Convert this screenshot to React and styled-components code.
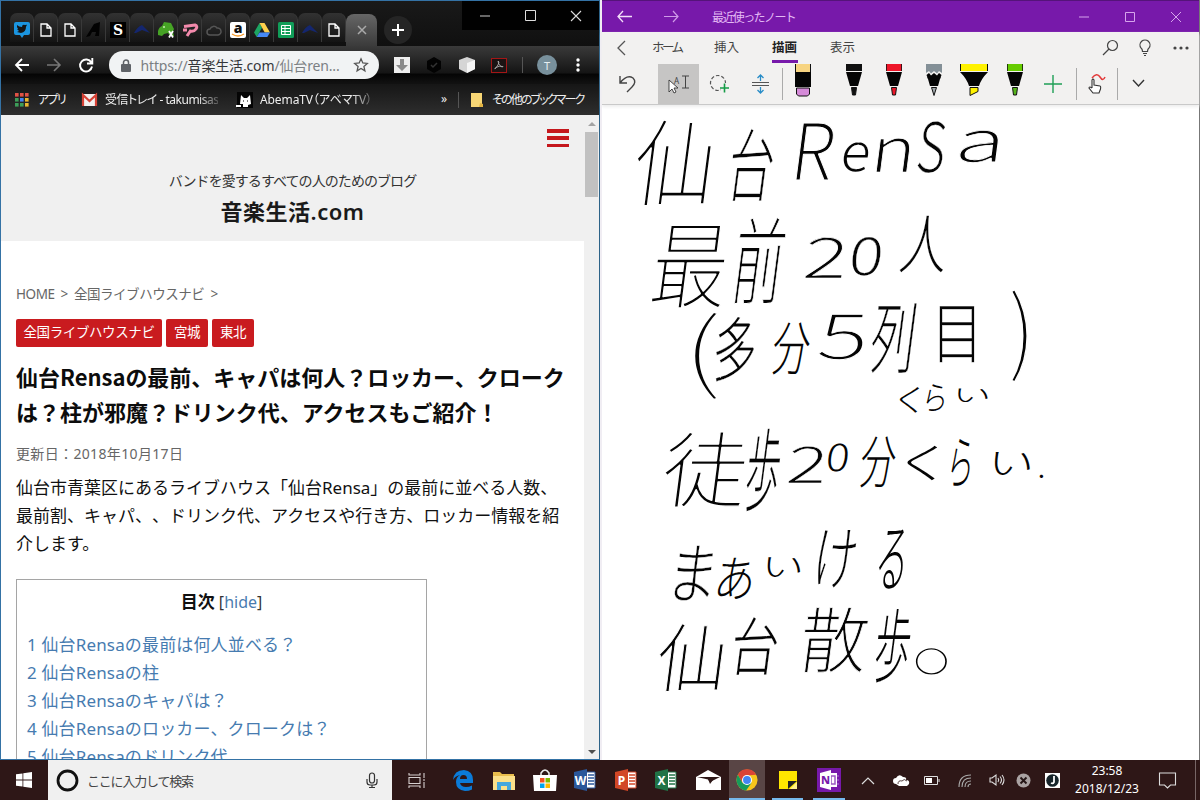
import React from "react";
import styled, { createGlobalStyle } from "styled-components";

const Global = createGlobalStyle`
  * { box-sizing: border-box; }
  body { margin: 0; background: #fff; font-family: "Noto Sans", "Noto Sans CJK JP", sans-serif; text-spacing-trim: space-all; }
  svg { display: block; flex: none; overflow: visible; }
`;

const Desktop = styled.div`
  width: 1200px; height: 800px; overflow: hidden;
  display: flex; flex-direction: column;
`;
const Windows = styled.div`display: flex; height: 760px;`;

/* ---------- browser window ---------- */
const Browser = styled.section`
  width: 600px; height: 760px; display: flex; flex-direction: column; overflow: hidden;
  border: 1px solid #3472a5; border-right-color: #2d6388; background: #161616;
`;
const TabStrip = styled.div`
  height: 45px; display: flex; align-items: flex-start; padding-left: 9px;
  background: linear-gradient(#191919, #101010);
`;
const Tab = styled.div`
  width: 24px; height: 29px; margin-top: 12px; padding-left: 1px;
  display: flex; align-items: center; justify-content: center;
  background: linear-gradient(#323232, #141414); border-radius: 7px 7px 0 0;
  border-right: 1px solid #393939; padding-top: 5px;
`;
const ActiveTab = styled.div`
  width: 31px; height: 32px; margin-top: 13px; display: flex; align-items: center; justify-content: center;
  background: linear-gradient(#666, #3b3b3b); border-radius: 8px 8px 0 0;
`;
const NewTab = styled.div`
  width: 28px; height: 28px; margin: 15px 0 0 7px; border-radius: 50%;
  background: #252525; display: flex; align-items: center; justify-content: center;
`;
const Controls = styled.div`
  width: 137px; height: 29px; margin-left: auto; background: #010101;
  display: flex; justify-content: space-around; align-items: center;
`;
const Toolbar = styled.div`
  height: 38px; display: flex; align-items: center; flex: none;
  background: linear-gradient(#3a3a3a, #151515 70%, #050505 75%, #121212);
`;
const ToolIcon = styled.span`
  width: ${(p) => p.$w || 32}px; display: flex; justify-content: center; flex: none;
`;
const Omnibox = styled.div`
  width: 270px; height: 28px; margin-left: 2px; border-radius: 14px; background: #f1f3f4; flex: none;
  display: flex; align-items: center; justify-content: space-between; padding: 0 11px 0 12px;
  font-size: 14px; color: #7b7f83; white-space: nowrap;
`;
const Url = styled.span`
  width: 204px; letter-spacing: -0.15px;
  b { font-weight: 400; color: #35373a; }
`;
const Avatar = styled.span`
  width: 20px; height: 20px; border-radius: 50%; background: #78909c; color: #e7eef2; flex: none;
  font-size: 11px; display: flex; align-items: center; justify-content: center;
`;
const Divider = styled.i`
  width: 1px; height: ${(p) => p.$h}px; background: ${(p) => p.$c || "#555"}; flex: none;
`;
const Bookmarks = styled.div`
  height: 31px; flex: none; display: flex; align-items: center; padding: 0 0 0 14px;
  color: #eee; font-size: 12px; white-space: nowrap; background: linear-gradient(#161616, #2e2e2e);
`;
const Mark = styled.span`
  margin-left: ${(p) => p.$gap}px; width: ${(p) => p.$w}px; letter-spacing: ${(p) => p.$ls || 0}px; flex: none;
  position: relative; top: -1px;
  font-feature-settings: "palt";
  ${(p) => p.$fade && "mask-image: linear-gradient(90deg,#000 82%,rgba(0,0,0,.25));"}
`;
const Viewport = styled.div`display: flex; flex: 1; min-height: 0; background: #fff;`;
const Page = styled.main`width: 583px; overflow: hidden; color: #111;`;
const Scrollbar = styled.div`
  width: 15px; background: #f0f0f0; display: flex; flex-direction: column; align-items: center;
`;
const Thumb = styled.div`width: 13px; height: 65px; background: #c1c1c1; margin: 6px 0 auto;`;
const Arrow = styled.i`
  margin: ${(p) => (p.$down ? "0 0 5px" : "7px 0 0")};
  border: 4px solid transparent;
  ${(p) => (p.$down ? "border-top-color:#505050;border-bottom:0" : "border-bottom-color:#a3a3a3;border-top:0")};
`;
const SiteHeader = styled.header`
  height: 126px; background: #f0f0f0; display: flex; flex-direction: column; align-items: center;
`;
const Burger = styled.div`
  align-self: flex-end; margin: 14px 15px 0 0; width: 22px; height: 18px;
  display: flex; flex-direction: column; justify-content: space-between;
  i { height: 3.5px; background: #c5171c; }
`;
const Tagline = styled.div`
  margin-top: 24px; height: 20px; line-height: 20px; font-size: 14px; letter-spacing: -0.93px; color: #333; white-space: nowrap;
`;
const SiteName = styled.h1`
  margin: 5px 0 0; font-size: 22px; line-height: 30px; letter-spacing: 0.5px; font-weight: 600; color: #1a1a1a;
`;
const Article = styled.article`padding: 42px 0 0 15px;`;
const Crumbs = styled.div`
  height: 22px; line-height: 22px; font-size: 13.5px; letter-spacing: -0.45px; word-spacing: 3px; color: #666; white-space: pre;
`;
const Tags = styled.div`display: flex; gap: 4px; margin-top: 14px;`;
const Tag = styled.span`
  height: 28px; line-height: 26px; width: ${(p) => p.$w}px; text-align: center; background: #c91b1f; color: #fff;
  font-size: 13.5px; letter-spacing: -0.4px; border-radius: 2px; white-space: nowrap;
`;
const Title = styled.h2`
  margin: 12px 0 0; font-size: 22px; line-height: 35px; font-weight: 700; color: #0c0c0c; white-space: nowrap;
  font-family: "Noto Sans CJK JP", sans-serif; letter-spacing: -0.02px;
`;
const Updated = styled.div`margin-top: 15px; height: 20px; line-height: 20px; font-size: 14px; letter-spacing: 0.35px; color: #666;`;
const Lead = styled.p`margin: 10px 0 0; font-size: 17px; line-height: 28px; white-space: nowrap; color: #111;`;
const Toc = styled.nav`
  width: 411px; height: 240px; margin-top: 21px; border: 1px solid #a5a5a5; padding: 8px 10px; font-size: 17px;
`;
const TocTitle = styled.div`
  text-align: center; line-height: 28px; height: 28px; font-size: 16px; color: #333;
  strong { font-size: 17px; color: #111; } a { color: #4a7caf; }
`;
const TocItem = styled.div`line-height: 28px; color: #467bb0; white-space: nowrap; letter-spacing: 0.15px;`;
const TocList = styled.div`margin-top: 15px;`;

/* ---------- note window ---------- */
const Notes = styled.section`width: 600px; display: flex; flex-direction: column; background: #fff; border-left: 2px solid #f0edf3; border-right: 1px solid #777;`;
const TitleBar = styled.div`
  height: 32px; background: #7719aa; border-top: 1px solid #55137a; color: #e2b8f4;
  display: flex; align-items: center; font-size: 12px; flex: none;
`;
const Slot = styled.span`
  width: ${(p) => p.$w}px; display: flex; justify-content: center; align-items: center; flex: none; white-space: nowrap;
`;
const WindowName = styled.span`margin-left: 16px; letter-spacing: -1.6px; font-size: 12px; white-space: nowrap;`;
const Grow = styled.span`flex: 1;`;
const Ribbon = styled.div`
  background: #f2f1f0; height: 73px; border-bottom: 1px solid #c9c9c9; flex: none; box-shadow: 0 2px 3px #eee;
`;
const MenuRow = styled.div`display: flex; height: 31px; align-items: center; font-size: 12.5px; color: #444;`;
const MenuItem = styled.span`
  width: ${(p) => p.$w}px; height: 31px; line-height: 31px; margin-right: ${(p) => p.$gap}px; letter-spacing: ${(p) => p.$ls || 0}px; white-space: nowrap;
  ${(p) => p.$on && "font-weight:700;color:#222;border-bottom:3px solid #7719aa;"}
`;
const ToolRow = styled.div`display: flex; height: 41px; align-items: center;`;
const Selected = styled.span`
  width: 41px; height: 40px; background: #c6c5c4; display: flex; align-items: center; justify-content: center;
`;
const Canvas = styled.div`flex: 1; min-height: 0;`;
const Ink = styled.text`
  font-family: "Noto Sans CJK JP", sans-serif; font-weight: 300; fill: #050505;
  stroke: #fff; stroke-linejoin: round;
`;

/* ---------- taskbar ---------- */
const Taskbar = styled.footer`height: 40px; display: flex; background: #2e1717; color: #fff; flex: none;`;
const Cell = styled.div`
  width: ${(p) => p.$w}px; height: 40px; display: flex; align-items: center; justify-content: center; flex: none;
  background: ${(p) => (p.$active ? "#594545" : "transparent")};
`;
const Running = styled(Cell)`border-bottom: 2px solid #76b9ed; padding-top: 2px; margin: 0 ${(p) => p.$m || 0}px;`;
const Search = styled.div`
  width: 344px; background: #f0f0f0; color: #444; font-size: 13px; display: flex; align-items: center; padding: 0 14px 0 8px;
  span { flex: 1; margin-left: 8px; letter-spacing: -1.2px; }
`;
const Clock = styled.div`
  width: 76px; text-align: center; font-size: 12px; line-height: 18px; display: flex; flex-direction: column; justify-content: center; white-space: nowrap;
`;

/* Small line icon; width and height double as its viewBox */
const Line = ({ w = 16, h = w, d, c = "#fff", s = 1.5, fill = "none", children }) => (
  <svg width={w} height={h} viewBox={`0 0 ${w} ${h}`} fill={fill} stroke={c} strokeWidth={s}>
    {d && <path d={d} />}
    {children}
  </svg>
);

const FileIcon = () => <Line w={12} h={14} d="M1 1h6l4 4v8H1zM7 1v4h4" s={1.3} />;
const Peak = () => <Line w={16} h={10} c="none" fill="#14266e" d="M0 8Q4 1 8 0l8 8-8-3-6 3z" />;
const favicons = [
  <svg width="16" height="16"><path d="M2 0h12a2 2 0 012 2v9a2 2 0 01-2 2h-4l-2 3-2-3H2a2 2 0 01-2-2V2a2 2 0 012-2z" fill="#1b95e0" /><path d="M3 3q2 2 5 2 0-3 3-2l2-.3-1 2Q12 10 7 11l-4-1 2-1-2-2h1L3 5z" fill="#151515" /></svg>,
  <FileIcon />, <FileIcon />,
  <svg width="16" height="16"><path d="M0 15L8 2l6-2-1 14H9l1-4H6l-2 4z" fill="#020202" /></svg>,
  <svg width="16" height="16"><rect width="16" height="16" fill="#000" /><text x="8" y="13" textAnchor="middle" fontSize="14" fontWeight="800" fill="#fff" fontFamily="DejaVu Serif, serif">S</text></svg>,
  <Peak />,
  <svg width="17" height="16"><path d="M0 9Q1 5 4 4l2-4 7 1 3 6-1 3 1 4h-4l-2-3-4 1-2 2-4-1z" fill="#46a325" /><circle cx="6" cy="5" r="1" fill="#c7efae" /><path d="M11 9l4 6.500m0-6.500l-4 6.500" stroke="#fff" strokeWidth="1.800" /></svg>,
  <svg width="15" height="15"><path d="M1 3.500L12 2q3 1 1 4-2 3-6 2M8 7l-4 6M0 7h4" stroke="#f38aac" strokeWidth="3" fill="none" strokeLinejoin="round" /></svg>,
  <svg width="16" height="12"><path d="M4 11a3 3 0 010-6 4 4 0 017-1 3 3 0 011 7z" fill="none" stroke="#555" strokeWidth="1.5" /></svg>,
  <svg width="16" height="16"><rect width="16" height="16" rx="2" fill="#fff" /><text x="8" y="11" textAnchor="middle" fontSize="14" fontWeight="800" fill="#111" fontFamily="Open Sans, sans-serif">a</text><path d="M2 12q6 4 12 0" stroke="#f79a28" strokeWidth="1.3" fill="none" /></svg>,
  <svg width="16" height="14"><path d="M5.5 0L0 9.5l2.7 4.5L8 4.7z" fill="#1da462" /><path d="M5.5 0h5L16 9.5h-5.3z" fill="#ffd04c" /><path d="M5.4 9.5H16L13.3 14H2.7z" fill="#4688f4" /></svg>,
  <svg width="16" height="16"><rect width="16" height="16" rx="1.5" fill="#109d58" /><path d="M3.5 3.5h9v9h-9zM3.5 6.5h9M3.5 9.5h9M7 3.5v9" fill="none" stroke="#fff" /></svg>,
  <Peak />, <FileIcon />,
];

const Pen = ({ top, tip, kind }) => (
  <svg width="30" height="34" viewBox="0 0 30 34">
    {kind === "eraser" ? (
      <>
        <path d="M7 -3h16v8H7z" fill="#f7d481" /><path d="M7.5 -3v8M22.500 -3v8" stroke="#111" />
        <path d="M7 5h16v15H7z" fill="#050505" />
        <path d="M8.500 21h13v6l-2 2h-9l-2-2z" fill="#d58ad8" stroke="#111" />
      </>
    ) : kind === "marker" ? (
      <>
        <path d="M1 -3h28v7H1z" fill={top} /><path d="M1.500 -3v7M28.500 -3v7" stroke="#111" />
        <path d="M1 5h28Q22 12 20 19H10Q8 12 1 5z" fill="#050505" /><path d="M11 20.500h8v4l-8 4z" fill={tip} stroke="#111" />
      </>
    ) : (
      <>
        <path d="M7 -3h16v7H7z" fill={top} /><path d="M7.500 -3v7M22.500 -3v7" stroke="#111" strokeWidth=".8" />
        <path d="M7 5h16l-4 14h-8z" fill="#050505" />
        {kind === "pencil" && <><path d="M6 4h18v6H6z" fill="#f2f1f0" /><path d="M7 -3h16v9l-3-2-2 2.500-3-2.500-3 2.500L10 4l-3 2z" fill="#849097" /><path d="M7.500 8l2.500-2 2 2.500 3-2.500 3 2.500 2-2.500 2.500 2L21 12H9z" fill="#050505" /></>}
        <path d={kind === "pencil" ? "M12.500 20.500h5l-2.500 8z" : "M12.500 20.500h5l-1 7.500h-3z"} fill={tip} stroke="#111" />
      </>
    )}
  </svg>
);

/* Inked notes: [character, left, top, right, bottom] on the page canvas */
const inked = [
  [["仙", 636, 119, 717, 207], ["台", 729, 128, 776, 201], ["R", 798, 123, 838, 180], ["e", 843, 142, 870, 172], ["n", 877, 138, 912, 172], ["S", 919, 121, 947, 173], ["a", 959, 130, 1000, 163]],
  [["最", 653, 222, 730, 309], ["前", 734, 218, 787, 305], ["2", 807, 236, 848, 278], ["0", 852, 236, 884, 276], ["人", 902, 213, 949, 273]],
  [["(", 693, 313, 720, 401], ["多", 714, 317, 758, 382], ["分", 773, 321, 811, 375], ["5", 820, 313, 868, 360], ["列", 872, 301, 918, 373], ["目", 933, 301, 981, 362], [")", 1012, 290, 1029, 382]],
  [["く", 900, 387, 920, 413], ["ら", 927, 383, 945, 411], ["い", 956, 388, 989, 401]],
  [["徒", 665, 432, 748, 508], ["歩", 746, 428, 783, 511], ["2", 790, 445, 827, 483], ["0", 828, 443, 850, 472], ["分", 861, 435, 897, 488], ["く", 908, 445, 939, 480], ["ら", 952, 437, 972, 486], ["い", 992, 452, 1032, 474], [".", 1040, 474, 1044, 478]],
  [["ま", 673, 545, 715, 601], ["あ", 718, 557, 754, 599], ["い", 765, 557, 802, 576], ["け", 817, 529, 857, 588], ["る", 880, 527, 907, 588]],
  [["仙", 659, 623, 728, 692], ["台", 732, 617, 780, 675], ["散", 802, 607, 869, 673], ["歩", 875, 608, 913, 682], ["。", 917, 649, 948, 676]],
];
/* Ink box of a glyph in em units: left, top above baseline, width, height */
const boxes = {
  R: [0.1, 0.73, 0.52, 0.73], e: [0.05, 0.55, 0.46, 0.57], n: [0.09, 0.55, 0.43, 0.55], S: [0.05, 0.745, 0.5, 0.76], a: [0.05, 0.55, 0.42, 0.57],
  2: [0.045, 0.745, 0.46, 0.745], 0: [0.05, 0.745, 0.46, 0.76], 5: [0.03, 0.73, 0.47, 0.745], "(": [0.09, 0.8, 0.2, 1], ")": [0.04, 0.8, 0.2, 1],
  く: [0.24, 0.8, 0.48, 0.86], ら: [0.2, 0.8, 0.62, 0.84], い: [0.1, 0.69, 0.82, 0.66], ま: [0.13, 0.8, 0.74, 0.84], あ: [0.1, 0.8, 0.81, 0.84],
  け: [0.1, 0.79, 0.82, 0.84], る: [0.15, 0.77, 0.7, 0.8], "。": [0.07, 0.22, 0.27, 0.28], ".": [0.08, 0.12, 0.12, 0.13],
};
const kanjiBox = [0.04, 0.84, 0.92, 0.92];
const upright = "().。目";
const thinning = { ".": 0, "(": 2.2, ")": 1.6, "。": 2.4 };

function InkGlyph({ item }) {
  const [ch, l, t, r, b] = item;
  const [bx, by, bw, bh] = boxes[ch] || kanjiBox;
  const slant = upright.includes(ch) ? 0 : 0.13;
  const lean = slant * (b - t);
  const sx = (r - l - lean * 0.5) / bw;
  const sy = (b - t) / bh;
  const size = 100;
  const slim = thinning[ch] ?? Math.max(0, 4.6 - 240 / Math.sqrt(sx * sy));
  return (
    <Ink
      fontSize={size}
      strokeWidth={slim}
      transform={`translate(${l - lean * 0.35} ${b}) matrix(1 0 ${-slant} 1 0 0) translate(${-bx * sx} ${(by - bh) * sy}) scale(${sx / size} ${sy / size})`}
    >
      {ch}
    </Ink>
  );
}

const Office = ({ letter, color }) => (
  <svg width="23" height="22">
    <path d="M12 3h9v16h-9z" fill="#fff" stroke={color} />
    <path d="M14 6h6M14 9h6M14 12h6M14 15h6" stroke={color} strokeWidth="1.4" />
    <path d="M0 3L13 0v22L0 19z" fill={color} />
    <text x="6.5" y="15.500" textAnchor="middle" fontSize="12" fontWeight="700" fill="#fff" fontFamily="Noto Sans, sans-serif">{letter}</text>
  </svg>
);

const toc = ["1 仙台Rensaの最前は何人並べる？", "2 仙台Rensaの柱", "3 仙台Rensaのキャパは？", "4 仙台Rensaのロッカー、クロークは？", "5 仙台Rensaのドリンク代"];

function BrowserWindow() {
  return (
    <Browser>
      <TabStrip>
        {favicons.map((f, i) => <Tab key={i}>{f}</Tab>)}
        <ActiveTab><Line w={8} d="M0 0l8 8M8 0L0 8" c="#aaa" /></ActiveTab>
        <NewTab><Line w={12} d="M6 0v12M0 6h12" s={2} /></NewTab>
        <Controls>
          <Line w={10} d="M0 5h10" s={1} c="#ccc" />
          <Line w={11} d="M.5 .5h10v10H.5z" s={1} c="#ddd" />
          <Line w={10} d="M0 0l10 10M10 0L0 10" s={1.1} c="#ddd" />
        </Controls>
      </TabStrip>
      <Toolbar>
        <ToolIcon $w={42}><Line w={14} h={12} d="M14 6H1M7 0L1 6l6 6" s={1.8} /></ToolIcon>
        <ToolIcon $w={22}><Line w={14} h={12} d="M0 6h13M7 0l6 6-6 6" s={1.6} c="#777" /></ToolIcon>
        <ToolIcon $w={42}><Line w={14} d="M12.300 4.500A6 6 0 1013 8.500M13.300 0v5.500H8" s={1.9} /></ToolIcon>
        <Omnibox>
          <svg width="10" height="13"><rect y="5" width="10" height="8" rx="1" fill="#5f6368" /><path d="M2.500 6V3.500a2.500 2.500 0 015 0V6" fill="none" stroke="#5f6368" strokeWidth="1.500" /></svg>
          <Url>https://<b>音楽生活.com</b>/仙台ren...</Url>
          <Line w={14} d="M7 .8l1.800 4.200 4.500.4-3.400 3 1 4.400L7 10.500l-3.900 2.300 1-4.400-3.400-3 4.500-.4z" c="#555" s={1.3} />
        </Omnibox>
        <ToolIcon $w={46}><svg width="16" height="16"><rect width="16" height="16" fill="#eee" /><path d="M6 2h4v6h4l-6 6-6-6h4z" fill="#8a8a8a" /></svg></ToolIcon>
        <ToolIcon $w={18}><svg width="14" height="16"><path d="M7 0l7 4v8l-7 4-7-4V4z" fill="#030303" /><path d="M4 8l2 2 4-4" stroke="#333" fill="none" strokeWidth="1.500" /></svg></ToolIcon>
        <ToolIcon $w={48}><svg width="16" height="16"><path d="M8 0l8 3v9l-8 4-8-4V3z" fill="#d5d5d5" /><path d="M8 6l8-3v9l-8 4z" fill="#f5f5f5" /></svg></ToolIcon>
        <ToolIcon $w={16}><svg width="16" height="15"><rect x=".5" y=".5" width="15" height="14" fill="#1b1313" stroke="#a31616" /><path d="M7 3q2 0 0 4l-3 4q-1 0 1-1.500 3-2 7-1 0 1-2 0Q7 6 7 3" stroke="#aaa" fill="none" strokeWidth=".9" /></svg></ToolIcon>
        <ToolIcon $w={30}><Divider $h={16} /></ToolIcon>
        <Avatar>T</Avatar>
        <ToolIcon $w={42}><svg width="4" height="14" fill="#fff"><circle cx="2" cy="2" r="1.700" /><circle cx="2" cy="7" r="1.700" /><circle cx="2" cy="12" r="1.700" /></svg></ToolIcon>
      </Toolbar>
      <Bookmarks>
        <svg width="14" height="14">
          {["#e05245", "#e05245", "#e05245", "#3d9e59", "#4285f4", "#e9b730", "#3d9e59", "#3d9e59", "#e9b730"].map((c, i) => (
            <rect key={i} x={(i % 3) * 5} y={Math.floor(i / 3) * 5} width="3.600" height="3.600" fill={c} />
          ))}
        </svg>
        <Mark $gap={9} $w={28} $ls={-1.7}>アプリ</Mark>
        <svg width="31" height="12"><rect x="16" width="15" height="12" rx="1" fill="#f3f0ef" /><path d="M17 12V1l6.500 6L30 1v11" stroke="#d64236" strokeWidth="2.200" fill="none" /></svg>
        <Mark $gap={8} $w={113} $ls={-0.5} $fade>受信トレイ - takumisas</Mark>
        <svg width="35" height="16"><rect x="19" width="16" height="16" fill="#050505" /><path d="M22 12l1-9 3 3h3l3-3 1 9-3 1v2h-5v-3zM18 13h5v2h-5m9-1h6" fill="#fff" /><path d="M25 9h1m3 0h1" stroke="#000" /></svg>
        <Mark $gap={7} $w={112} $ls={-0.1} $fade>AbemaTV（アベマTV）</Mark>
        <Grow />
        <Mark $gap={0} $w={17}>»</Mark>
        <Divider $h={16} />
        <svg width="25" height="14"><path d="M12 0h11v14H12z" fill="#f8d775" /><path d="M21 10l3 1v3h-4z" fill="#e3b443" /></svg>
        <Mark $gap={8} $w={107} $ls={-1.85}>その他のブックマーク</Mark>
      </Bookmarks>
      <Viewport>
        <Page>
          <SiteHeader>
            <Burger><i /><i /><i /></Burger>
            <Tagline>バンドを愛するすべての人のためのブログ</Tagline>
            <SiteName>音楽生活.com</SiteName>
          </SiteHeader>
          <Article>
            <Crumbs>HOME &gt; 全国ライブハウスナビ &gt;</Crumbs>
            <Tags><Tag $w={146}>全国ライブハウスナビ</Tag><Tag $w={42}>宮城</Tag><Tag $w={42}>東北</Tag></Tags>
            <Title>仙台Rensaの最前、キャパは何人？ロッカー、クローク<br />は？柱が邪魔？ドリンク代、アクセスもご紹介！</Title>
            <Updated>更新日：2018年10月17日</Updated>
            <Lead>仙台市青葉区にあるライブハウス「仙台Rensa」の最前に並べる人数、<br />最前割、キャパ、、ドリンク代、アクセスや行き方、ロッカー情報を紹<br />介します。</Lead>
            <Toc>
              <TocTitle><strong>目次</strong> [<a>hide</a>]</TocTitle>
              <TocList>{toc.map((t) => <TocItem key={t}>{t}</TocItem>)}</TocList>
            </Toc>
          </Article>
        </Page>
        <Scrollbar><Arrow /><Thumb /><Arrow $down /></Scrollbar>
      </Viewport>
    </Browser>
  );
}

function NotesWindow() {
  return (
    <Notes>
      <TitleBar>
        <Slot $w={44}><Line w={15} h={11} d="M15 5.500H1M6 0L1 5.500 6 11" s={1.3} c="#f3def9" /></Slot>
        <Slot $w={50}><Line w={15} h={11} d="M0 5.500h14M9 0l5 5.500L9 11" s={1.2} c="#cf9ae8" /></Slot>
        <WindowName>最近使ったノート</WindowName>
        <Grow />
        <Slot $w={46}><Line w={10} d="M0 5h10" s={1} c="#d6a4ec" /></Slot>
        <Slot $w={46}><Line w={10} d="M.5 .5h9v9h-9z" s={1} c="#d6a4ec" /></Slot>
        <Slot $w={46}><Line w={10} d="M0 0l10 10M10 0L0 10" s={1} c="#d6a4ec" /></Slot>
      </TitleBar>
      <Ribbon>
        <MenuRow>
          <Slot $w={38}><Line w={8} h={14} d="M8 0L1 7l7 7" c="#555" s={1.3} /></Slot>
          <Slot $w={12} />
          <MenuItem $w={29} $gap={33} $ls={-2.6}>ホーム</MenuItem>
          <MenuItem $w={26} $gap={32}>挿入</MenuItem>
          <MenuItem $w={26} $gap={32} $on>描画</MenuItem>
          <MenuItem $w={26} $gap={0}>表示</MenuItem>
          <Grow />
          <Slot $w={36}><Line w={15} h={15} c="#444" s={1.2} d="M6 9l-6 6"><circle cx="9.500" cy="5.500" r="5" /></Line></Slot>
          <Slot $w={34}><Line w={12} h={16} c="#444" s={1.2} d="M3.500 11.500Q3.500 9 2 8a5 5 0 118 0Q8.500 9 8.500 11.500zM4 13.500h4M5 15.500h2" /></Slot>
          <Slot $w={37}><svg width="16" height="4" fill="#444"><circle cx="2" cy="2" r="1.600" /><circle cx="8" cy="2" r="1.600" /><circle cx="14" cy="2" r="1.600" /></svg></Slot>
        </MenuRow>
        <ToolRow>
          <Slot $w={50}><Line w={17} h={17} d="M1 1v7h7M1 8Q8-1 14 3q4 4-1 9l-5 5" c="#444" s={1.4} /></Slot>
          <Slot $w={6} />
          <Selected>
            <svg width="22" height="20"><text x="6" y="10" fontSize="8" fill="#444" fontFamily="Noto Sans, sans-serif">A</text><path d="M14 2h7M14 14h7M17.500 2v12" stroke="#444" /><path d="M1 6v12l3-3 2 4 2-1-2-4h4z" fill="#fff" stroke="#333" strokeWidth=".9" /></svg>
          </Selected>
          <Slot $w={42}><svg width="20" height="20"><circle cx="8" cy="9" r="7.500" fill="none" stroke="#555" strokeDasharray="3.500 2" strokeWidth="1.200" /><path d="M11 9h9v9h-9z" fill="#f2f1f0" /><path d="M14.500 9.500v9M10 14h9" stroke="#159c47" strokeWidth="1.600" /></svg></Slot>
          <Slot $w={38}><svg width="17" height="20"><path d="M0 8.500h17M0 11.500h17" stroke="#555" strokeWidth="1.200" /><path d="M8.500 7V1M5.500 4l3-3 3 3M8.500 13v6M5.500 16l3 3 3-3" fill="none" stroke="#278cc7" strokeWidth="1.300" /></svg></Slot>
          <Slot $w={6}><Divider $h={32} $c="#aaa" /></Slot>
          <Slot $w={36}><Pen kind="eraser" /></Slot>
          <Slot $w={15} />
          <NotePens />
          <Slot $w={40}><Line w={18} d="M9 0v18M0 9h18" c="#1f9f55" s={1.4} /></Slot>
          <Slot $w={7}><Divider $h={32} $c="#aaa" /></Slot>
          <Slot $w={34}><svg width="18" height="20"><path d="M4 4Q9-2 12 3t5 0" fill="none" stroke="#e33b3b" strokeWidth="1.500" /><path d="M4 14V6q1-2 2 0v5l6 1q1 0 .500 3l-1.500 4H5l-4-5q0-2 3 0" fill="#fff" stroke="#333" strokeWidth="1.100" /></svg></Slot>
          <Slot $w={7}><Divider $h={32} $c="#aaa" /></Slot>
          <Slot $w={34}><Line w={11} h={7} d="M0 0l5.500 6L11 0" c="#333" s={1.4} /></Slot>
        </ToolRow>
      </Ribbon>
      <Canvas>
        <svg width="597" height="655" viewBox="602 105 597 655">
          {inked.map((line, i) => <g key={i}>{line.map((item) => <InkGlyph key={item[0] + item[1]} item={item} />)}</g>)}
        </svg>
      </Canvas>
    </Notes>
  );
}

function NotePens() {
  return (
    <>
      <Slot $w={36}><Pen top="#111" tip="#111" /></Slot>
      <Slot $w={44}><Pen top="#ee1629" tip="#ee1629" /></Slot>
      <Slot $w={36}><Pen kind="pencil" top="#849097" tip="#a0a7aa" /></Slot>
      <Slot $w={44}><Pen kind="marker" top="#fff200" tip="#fff200" /></Slot>
      <Slot $w={37}><Pen top="#66cc00" tip="#55b51a" /></Slot>
    </>
  );
}

function SystemBar() {
  return (
    <Taskbar>
      <Cell $w={48}><svg width="16" height="16" fill="#fff"><path d="M0 2.300l6.500-.9v6.200H0zM7.300 1.300L16 0v7.600H7.300zM0 8.400h6.500v6.200L0 13.700zM7.300 8.400H16V16l-8.700-1.300z" /></svg></Cell>
      <Search>
        <svg width="23" height="23"><circle cx="11.500" cy="11.500" r="9.500" fill="none" stroke="#111" strokeWidth="2.800" /></svg>
        <span>ここに入力して検索</span>
        <Line w={12} h={16} c="#333" s={1.2} d="M6 1a2.500 2.500 0 012.500 2.500v5a2.500 2.500 0 01-5 0v-5A2.500 2.500 0 016 1zM1 7v3q0 3 3 3h4q3 0 3-3V7M6 13v2M3 15.500h6" />
      </Search>
      <Cell $w={49}><Line w={17} h={15} c="#d7cfcf" s={1.1} d="M1 0v2h11V0M1 15v-2h11v2M1 4.500h11v6H1zM16 0v5M16 9v6M16 6v2" /></Cell>
      <Cell $w={43}><svg width="20" height="21"><path d="M0 10Q1 0 11 0q9 1 9 10v3H7q1 4 6 4 3 0 6-1.500v4Q16 21 12 21 3 20 3 12q0-5 4-7-5 1-7 5zM7 9h7q0-4-3.500-4T7 9z" fill="#0b7bd8" /></svg></Cell>
      <Cell $w={40}><svg width="22" height="19"><path d="M0 1h7l2 2h12v16H0z" fill="#e9bd4d" /><path d="M0 5h22v14H0z" fill="#fbe08a" /><path d="M4 19v-8h14v8h-4v-4H8v4z" fill="#45a7dd" /></svg></Cell>
      <Cell $w={41}><svg width="24" height="22"><path d="M8 7V4q4-6 8 0v3" fill="none" stroke="#eee" strokeWidth="1.500" /><path d="M0 6h24l-1 16H1z" fill="#fff" /><path d="M7 9h4.500v4.500H7z" fill="#f25022" /><path d="M12.500 9H17v4.500h-4.500z" fill="#7fba00" /><path d="M7 14.500h4.500V19H7z" fill="#00a4ef" /><path d="M12.500 14.500H17V19h-4.500z" fill="#ffb900" /></svg></Cell>
      <Cell $w={41}><Office letter="W" color="#2b579a" /></Cell>
      <Cell $w={40}><Office letter="P" color="#d24726" /></Cell>
      <Cell $w={41}><Office letter="X" color="#217346" /></Cell>
      <Cell $w={42}><svg width="25" height="20"><path d="M0 7l12-7 13 7v13H0z" fill="#fff" /><path d="M1 7h23l-10 5-2-2.500z" fill="#2e1717" /><path d="M12 9l2 5 3-4z" fill="#2e1717" /></svg></Cell>
      <Running $w={36} $active>
        <svg width="22" height="22" viewBox="-12 -12 24 24"><circle r="11.500" fill="#f6c51c" /><path d="M-10-5.800A11.500 11.500 0 0110-5.800L0-5 -5 3z" fill="#db4437" /><path d="M-10-5.800A11.500 11.500 0 00-1 11.400L5 3-5 3z" fill="#169b5b" /><circle r="5.500" fill="#fff" /><circle r="4.300" fill="#4285f4" /></svg>
      </Running>
      <Running $w={31} $m={7}><svg width="18" height="18"><path d="M0 0h18v18H0z" fill="#ffe600" /><path d="M9 18v-8h9z" fill="#222" /><path d="M11 18l7-7v7z" fill="#fff08a" /></svg></Running>
      <Running $w={32} $m={3}><svg width="24" height="24"><path d="M0 0h24v24H0z" fill="#7719aa" /><path d="M12 5h8v14h-8z" fill="#fff" /><path d="M20 8h2M20 12h2M20 16h2M14 8h4v8h-4z" stroke="#9b59c2" strokeWidth="1.500" fill="none" /><path d="M3 5l11-3v20L3 19z" fill="#fff" /><text x="8.500" y="16" textAnchor="middle" fontSize="11" fontWeight="800" fill="#7719aa" fontFamily="Noto Sans, sans-serif">N</text></svg></Running>
      <Cell $w={39}><Line w={12} h={7} c="#ddd" s={1.2} d="M0 7l6-6 6 6" /></Cell>
      <Cell $w={28}><svg width="17" height="11"><path d="M3 9a3 3 0 010-6Q6-2 10 2q4 0 3 3 4 0 3 4l-2 2H6z" fill="#fff" /><path d="M5 9q0-4 4-3 2-3 5 0" fill="none" stroke="#2e1717" strokeWidth=".8" /></svg></Cell>
      <Cell $w={33}><svg width="16" height="9"><path d="M.5.5h13v8H.5zM15 3v3" stroke="#ddd" fill="none" /><path d="M2 2h6v5H2z" fill="#fff" /></svg></Cell>
      <Cell $w={33}><Line w={14} h={13} c="#aaa" s={1.1} d="M1 13Q1 1 13 1M4 13q0-9 9-9M7 13q0-6 6-6M10 13q0-3 3-3" /></Cell>
      <Cell $w={31}><Line w={15} h={12} c="#ddd" s={1.1} d="M1 4h2l4-3v10L3 8H1zM9 4q1.500 2 0 4M11 2.500q3 3.500 0 7M13 1q4 5 0 10" /></Cell>
      <Cell $w={23}><svg width="15" height="15"><circle cx="7.500" cy="7.500" r="7" fill="#aaa3a3" /><path d="M4.500 4.500l6 6M10.500 4.500l-6 6" stroke="#251717" strokeWidth="1.900" /></svg></Cell>
      <Cell $w={34}><svg width="15" height="15"><path d="M0 0h15v15H0z" fill="#fff" /><circle cx="7.500" cy="7.500" r="6.300" fill="#17252b" /><path d="M9 3v6q-1 2-3 1" stroke="#fff" strokeWidth="1.800" fill="none" /></svg></Cell>
      <Clock><span>23:58</span><span>2018/12/23</span></Clock>
      <Cell $w={44}><Line w={17} h={17} c="#ddd" s={1.1} d="M.5 1h16v12h-5l-3 3-3-3h-5z" /></Cell>
      <Grow /><Divider $h={40} $c="#776666" /><Slot $w={4} />
    </Taskbar>
  );
}

export default function App() {
  return (
    <Desktop>
      <Global />
      <Windows><BrowserWindow /><NotesWindow /></Windows>
      <SystemBar />
    </Desktop>
  );
}
